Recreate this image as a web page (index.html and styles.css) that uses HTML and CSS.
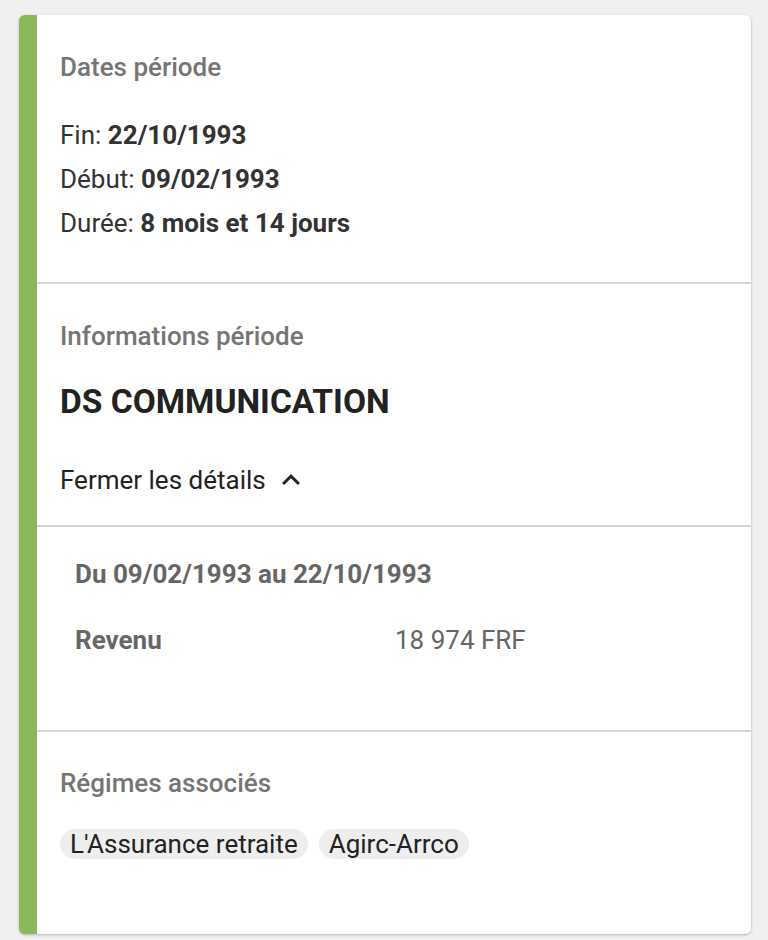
FILE: index.html
```html
<!DOCTYPE html>
<html lang="fr">
<head>
<meta charset="utf-8">
<link rel="stylesheet" href="styles.css">
</head>
<body>
<div class="card">
  <section class="section dates">
    <h2 class="label">Dates période</h2>
    <p class="line">Fin: <strong>22/10/1993</strong></p>
    <p class="line">Début: <strong>09/02/1993</strong></p>
    <p class="line">Durée: <strong>8 mois et 14 jours</strong></p>
  </section>
  <section class="section infos">
    <h2 class="label">Informations période</h2>
    <h3 class="company">DS COMMUNICATION</h3>
    <button class="toggle">Fermer les détails
      <svg class="chev" width="36" height="36" viewBox="0 0 24 24"><path d="M7.41 15.41 12 10.83l4.59 4.58L18 14l-6-6-6 6z" fill="#222"/></svg>
    </button>
  </section>
  <section class="section details">
    <div class="range">Du 09/02/1993 au 22/10/1993</div>
    <div class="row"><span class="key">Revenu</span><span class="val">18 974 FRF</span></div>
  </section>
  <section class="section regimes">
    <h2 class="label">Régimes associés</h2>
    <div class="chips">
      <span class="chip">L'Assurance retraite</span>
      <span class="chip">Agirc-Arrco</span>
    </div>
  </section>
</div>
</body>
</html>
```
FILE: styles.css
```css
* { box-sizing: border-box; }
html, body { margin: 0; padding: 0; }
body {
  background: #f0f0f0;
  font-family: Roboto, "Liberation Sans", sans-serif;
  padding: 15px 17px 6px 19px;
}
.card {
  background: #fff;
  border-left: 18px solid #8bb85a;
  border-radius: 6px;
  box-shadow: 0 1px 3px rgba(0,0,0,0.25);
  height: 919px;
  overflow: hidden;
}
.section { border-bottom: 2px solid #d6d6d6; padding-left: 23px; }
.section:last-child { border-bottom: none; }
.label {
  margin: 0;
  font-size: 26px;
  line-height: 30px;
  font-weight: 500;
  color: #757575;
}
.dates { padding-top: 37px; padding-bottom: 44px; }
.dates .label { margin-bottom: 38px; }
.line {
  margin: 0;
  font-size: 26px;
  line-height: 30px;
  color: #333;
}
.line + .line { margin-top: 14px; }
.line strong { font-weight: 700; }
.infos { padding-top: 37px; padding-bottom: 27px; }
.company {
  margin: 31px 0 0;
  font-size: 33.5px;
  line-height: 40px;
  font-weight: 700;
  color: #222;
}
.toggle {
  margin-top: 40px;
  display: flex;
  align-items: center;
  gap: 7px;
  border: 0;
  background: none;
  padding: 0;
  font-family: inherit;
  font-size: 26px;
  line-height: 36px;
  color: #222;
}
.details { padding: 32px 0 75px 38px; }
.range {
  font-size: 26px;
  line-height: 30px;
  font-weight: 700;
  color: #666;
}
.row {
  margin-top: 36px;
  display: grid;
  grid-template-columns: 320px 1fr;
  font-size: 26px;
  line-height: 30px;
  color: #666;
}
.key { font-weight: 700; }
.regimes { padding-top: 36px; }
.chips { display: flex; gap: 11px; margin-top: 31px; }
.chip {
  background: #eeeeee;
  border-radius: 15px;
  padding: 0 10px;
  height: 30px;
  line-height: 30px;
  font-size: 26px;
  color: #222;
}
```
